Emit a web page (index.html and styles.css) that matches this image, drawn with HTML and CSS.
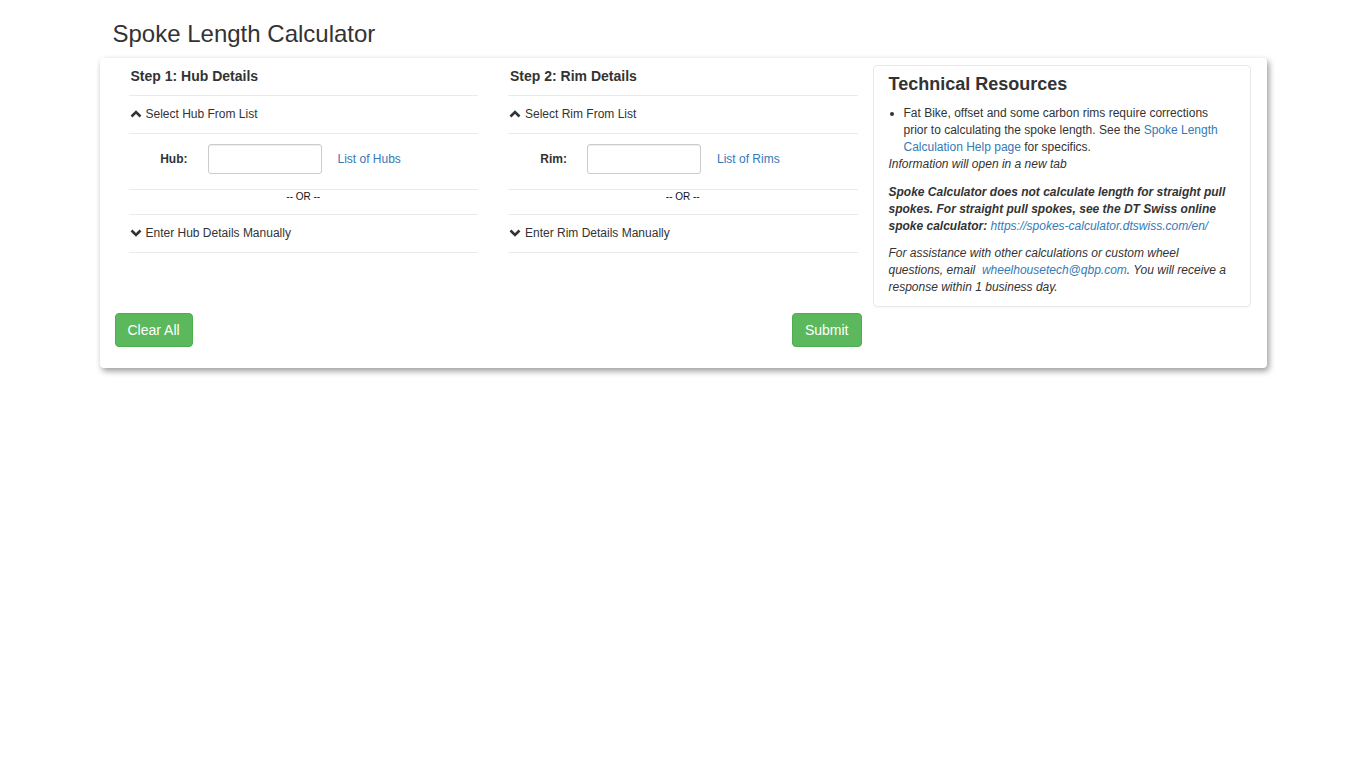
FILE: index.html
```html
<!DOCTYPE html>
<html lang="en">
    <head>
        <meta charset="UTF-8" />
        <meta name="viewport" content="width=device-width, initial-scale=1.0" />
        <title>Spoke Length Calculator</title>
        <link rel="stylesheet" href="styles.css">
    </head>
    <body>
        <div class="page">
            <h1 class="page-title">Spoke Length Calculator</h1>

            <div class="calc-card">
                <div class="steps">
                    <div class="step">
                        <h4 class="step-title">Step 1: Hub Details</h4>
                        <div class="toggle-row">
                            <svg class="chev" viewBox="0 0 12 8"><polyline points="1.5,6.5 6,2 10.5,6.5" /></svg>
                            Select Hub From List
                        </div>
                        <div class="input-row">
                            <label class="field-label" for="hub">Hub:</label>
                            <input class="field-input" id="hub" type="text">
                            <a class="field-link" href="#">List of Hubs</a>
                        </div>
                        <div class="or-row">-- OR --</div>
                        <div class="toggle-row">
                            <svg class="chev" viewBox="0 0 12 8"><polyline points="1.5,1.5 6,6 10.5,1.5" /></svg>
                            Enter Hub Details Manually
                        </div>
                    </div>

                    <div class="step">
                        <h4 class="step-title">Step 2: Rim Details</h4>
                        <div class="toggle-row">
                            <svg class="chev" viewBox="0 0 12 8"><polyline points="1.5,6.5 6,2 10.5,6.5" /></svg>
                            Select Rim From List
                        </div>
                        <div class="input-row">
                            <label class="field-label" for="rim">Rim:</label>
                            <input class="field-input" id="rim" type="text">
                            <a class="field-link" href="#">List of Rims</a>
                        </div>
                        <div class="or-row">-- OR --</div>
                        <div class="toggle-row">
                            <svg class="chev" viewBox="0 0 12 8"><polyline points="1.5,1.5 6,6 10.5,1.5" /></svg>
                            Enter Rim Details Manually
                        </div>
                    </div>
                </div>

                <div class="resources">
                    <h3>Technical Resources</h3>
                    <ul>
                        <li>
                            Fat Bike, offset and some carbon rims require corrections
                            prior to calculating the spoke length. See the
                            <a href="#">Spoke Length Calculation Help page</a> for specifics.
                        </li>
                    </ul>
                    <p class="note">Information will open in a new tab</p>
                    <p class="note strong">
                        Spoke Calculator does not calculate length for straight pull
                        spokes. For straight pull spokes, see the DT Swiss online
                        spoke calculator: <a href="#">https://spokes-calculator.dtswiss.com/en/</a>
                    </p>
                    <p class="note last">
                        For assistance with other calculations or custom wheel
                        questions, email &nbsp;<a href="#">wheelhousetech@qbp.com</a>. You will receive a
                        response within 1 business day.
                    </p>
                </div>

                <div class="actions">
                    <button class="btn" type="button">Clear All</button>
                    <button class="btn" type="button">Submit</button>
                </div>
            </div>
        </div>
    </body>
</html>
```

FILE: styles.css
```css
* {
    margin: 0;
    padding: 0;
    box-sizing: border-box;
}
body {
    font-family: "Liberation Sans", Arial, sans-serif;
    font-size: 12px;
    line-height: 1.42857;
    color: #333;
    background: #fff;
}
a {
    color: #337ab7;
    text-decoration: none;
}
.page {
    width: 1167px;
    margin: 0 auto;
    padding-bottom: 30px;
}
.page-title {
    font-size: 24px;
    font-weight: 400;
    line-height: 26px;
    padding: 21px 0 11px 13px;
}
.calc-card {
    display: grid;
    grid-template-columns: 747px 1fr;
    column-gap: 11px;
    row-gap: 6px;
    padding: 7px 16px 21px 15px;
    background: #fff;
    border-radius: 4px;
    box-shadow: 2px 3px 6px rgba(0, 0, 0, 0.4);
}
.steps {
    display: grid;
    grid-template-columns: 1fr 1fr;
    column-gap: 30px;
    padding: 0 4px 0 14px;
    align-self: start;
}
.step-title {
    font-size: 14px;
    font-weight: 700;
    line-height: 20px;
    margin-top: 1px;
    padding: 0 0 9px 2px;
    border-bottom: 1px solid #eaeaea;
}
.toggle-row {
    display: flex;
    align-items: center;
    line-height: 20px;
    padding: 8px 0 9px 1px;
    border-bottom: 1px solid #eaeaea;
}
.chev {
    width: 12px;
    height: 8px;
    margin-right: 4px;
    fill: none;
    stroke: #333;
    stroke-width: 2.6;
}
.input-row {
    display: flex;
    align-items: center;
    padding: 10px 0 15px;
    border-bottom: 1px solid #eaeaea;
}
.field-label {
    width: 59px;
    text-align: right;
    font-weight: 700;
    padding-top: 1px;
}
.field-input {
    width: 114px;
    height: 30px;
    margin-left: 20px;
    border: 1px solid #ccc;
    border-radius: 3px;
    box-shadow: inset 0 1px 1px rgba(0, 0, 0, 0.075);
}
.field-link {
    margin-left: 16px;
    padding-top: 1px;
}
.or-row {
    font-size: 10px;
    line-height: 13px;
    text-align: center;
    color: #111;
    padding-bottom: 11px;
    border-bottom: 1px solid #eaeaea;
}
.resources {
    padding: 8px 15px 10px;
    border: 1px solid #e8e8e8;
    border-radius: 4px;
    box-shadow: 0 1px 1px rgba(0, 0, 0, 0.03);
}
.resources h3 {
    font-size: 18px;
    font-weight: 700;
    line-height: 20px;
    margin-bottom: 11px;
}
.resources ul {
    padding-left: 15px;
    line-height: 17px;
}
.note {
    font-style: italic;
    line-height: 17px;
    margin-bottom: 11px;
}
.note.strong {
    margin-bottom: 10px;
}
.note.last {
    margin-bottom: 0;
}
.strong {
    font-weight: 700;
}
.strong a {
    font-weight: 400;
}
.actions {
    display: flex;
    justify-content: space-between;
}
.btn {
    font-family: "Liberation Sans", Arial, sans-serif;
    font-size: 14px;
    line-height: 20px;
    padding: 6px 12px;
    color: #fff;
    background: #5cb85c;
    border: 1px solid #4cae4c;
    border-radius: 4px;
    cursor: pointer;
}
```
